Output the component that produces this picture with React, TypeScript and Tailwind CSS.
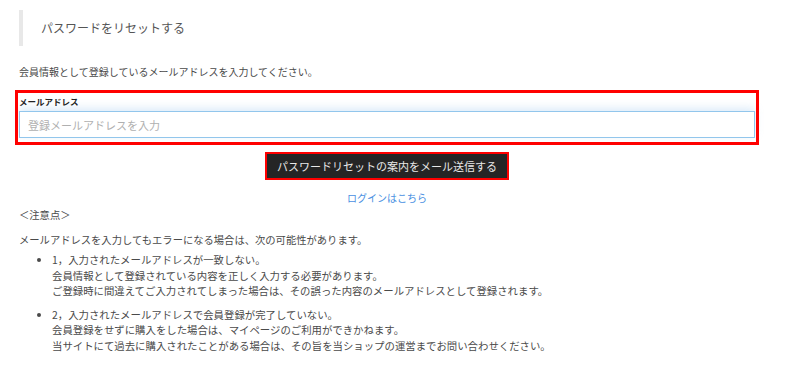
export default function App() {
  return (
    <div
      className="w-[800px] h-[373px] bg-white overflow-hidden text-[#4a4a4a]"
      style={{ fontFamily: '"Noto Sans CJK JP", "Noto Sans", sans-serif' }}
    >
      <div className="w-[736px] ml-[19px] pt-[10px]">
        {/* heading */}
        <div className="border-l-4 border-[#e8e8e8] h-[36px] pl-[18px] flex items-center">
          <h1 className="text-[12px] leading-[16px] text-[#555]">パスワードをリセットする</h1>
        </div>

        <p className="mt-[18px] text-[10px] leading-[16px]">
          会員情報として登録しているメールアドレスを入力してください。
        </p>

        {/* form group */}
        <div className="mt-[14px] outline-[3px] outline-solid outline-[#ff0000] outline-offset-[1px] pb-[3px]">
          <label className="block text-[8.5px] leading-[14px] font-bold text-[#222]">メールアドレス</label>
          <input
            type="email"
            placeholder="登録メールアドレスを入力"
            className="mt-[3px] block w-full h-[27px] border border-[#92c6ec] bg-white px-[8px] text-[11px] text-[#333] placeholder:text-[#b0b0b0] shadow-[0_-3px_8px_rgba(120,180,235,0.25)] outline-none"
          />
        </div>

        <div className="flex justify-center mt-[11px]">
          <button className="w-[240px] h-[24px] mt-[2px] bg-[#252525] text-[#e8e8e8] text-[11px] leading-[24px] outline-2 outline-solid outline-[#ff0000]">
            パスワードリセットの案内をメール送信する
          </button>
        </div>

        <div className="text-center mt-[5px]">
          <a className="text-[10px] leading-[14px] text-[#4a90e2]">ログインはこちら</a>
        </div>

        <p className="text-[10.3px] leading-[16px]">＜注意点＞</p>
        <p className="text-[10.3px] leading-[16px] mt-[9px]">
          メールアドレスを入力してもエラーになる場合は、次の可能性があります。
        </p>

        <ul className="list-disc pl-[33px] mt-[4px] text-[10.4px] leading-[15.5px]">
          <li>
            1，入力されたメールアドレスが一致しない。
            <br />
            会員情報として登録されている内容を正しく入力する必要があります。
            <br />
            ご登録時に間違えてご入力されてしまった場合は、その誤った内容のメールアドレスとして登録されます。
          </li>
          <li className="mt-[8px]">
            2，入力されたメールアドレスで会員登録が完了していない。
            <br />
            会員登録をせずに購入をした場合は、マイページのご利用ができかねます。
            <br />
            当サイトにて過去に購入されたことがある場合は、その旨を当ショップの運営までお問い合わせください。
          </li>
        </ul>
      </div>
    </div>
  );
}
